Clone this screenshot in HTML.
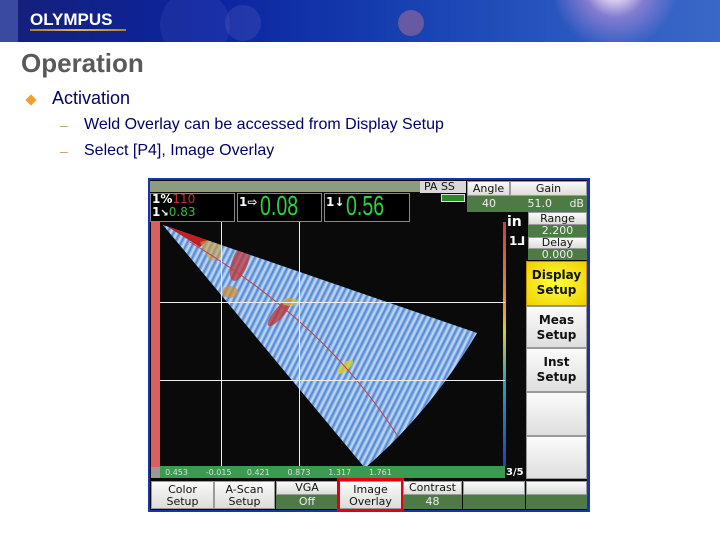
<!DOCTYPE html>
<html><head><meta charset="utf-8"><style>
*{margin:0;padding:0;box-sizing:border-box}
body{width:720px;height:540px;background:#fff;position:relative;overflow:hidden;font-family:"Liberation Sans",sans-serif}
.a{position:absolute}
.btn{position:absolute;background:linear-gradient(#fafafa,#dcdcd8);color:#111;font-size:11px;text-align:center;line-height:12px;font-family:"DejaVu Sans",sans-serif;border:1px solid #9a9a9a}
.gv{position:absolute;background:#4d7a45;color:#eee;font-size:11px;text-align:center;font-family:"DejaVu Sans",sans-serif}
.sb{position:absolute;background:linear-gradient(#fbfbfb,#dedede);border:1px solid #999;font:bold 12px "DejaVu Sans",sans-serif;text-align:center;line-height:15px;color:#111;padding-top:6px}
</style></head><body>
<!-- banner -->
<div class="a" style="left:0;top:0;width:720px;height:42px;overflow:hidden;background:linear-gradient(90deg,#14207a 0%,#0c24a0 30%,#163fb0 55%,#2a58c0 80%,#3a68c8 100%)">
<div class="a" style="left:0;top:0;width:18px;height:42px;background:#3a4aa0"></div>
<div class="a" style="left:160px;top:-10px;width:70px;height:70px;border-radius:50%;background:rgba(90,100,200,.18)"></div>
<div class="a" style="left:225px;top:5px;width:36px;height:36px;border-radius:50%;background:rgba(120,120,200,.2)"></div>
<div class="a" style="left:398px;top:10px;width:26px;height:26px;border-radius:50%;background:rgba(170,110,150,.55)"></div>
<div class="a" style="left:555px;top:-45px;width:120px;height:100px;border-radius:50%;background:radial-gradient(circle at 50% 30%,#fff 0%,#efe0f5 12%,rgba(200,150,220,.55) 35%,rgba(80,90,200,0) 70%)"></div>
<div class="a" style="left:30px;top:10px;color:#fff;font:bold 17px 'Liberation Sans',sans-serif">OLYMPUS</div>
<div class="a" style="left:30px;top:29px;width:96px;height:2px;background:linear-gradient(90deg,#b08030,#e0b060,#b08030)"></div>
</div>
<!-- text -->
<div class="a" style="left:21px;top:48px;color:#5a5a5a;font:bold 26px 'Liberation Sans',sans-serif">Operation</div>
<div class="a" style="left:27px;top:96px;width:8px;height:8px;background:#f0a030;transform:rotate(45deg)"></div>
<div class="a" style="left:52px;top:88px;color:#000066;font-size:18px">Activation</div>
<div class="a" style="left:60px;top:117px;color:#c8a060;font-size:14px">–</div>
<div class="a" style="left:84px;top:116px;color:#000066;font-size:16px">Weld Overlay can be accessed from Display Setup</div>
<div class="a" style="left:60px;top:143px;color:#c8a060;font-size:14px">–</div>
<div class="a" style="left:84px;top:142px;color:#000066;font-size:16px">Select [P4], Image Overlay</div>
<!-- screenshot -->
<div class="a" style="left:148px;top:178px;width:442px;height:334px;background:#1535b0"></div>
<div class="a" style="left:150px;top:180px;width:437px;height:330px;background:#0a0a0a"></div>
<div class="a" style="left:150px;top:181px;width:270px;height:11px;background:#8d9c7c"></div>
<div class="a" style="left:420px;top:181px;width:46px;height:12px;background:#d8d8d8;font:11px 'DejaVu Sans',sans-serif;color:#111;padding-left:4px;line-height:12px">PA SS</div>
<div class="a" style="left:441px;top:194px;width:24px;height:8px;background:#2a8a2a;border:1px solid #ddd"></div>
<div class="a" style="left:150px;top:193px;width:85px;height:29px;border:1px solid #888;background:#000"></div>
<div class="a" style="left:152px;top:193px;font:bold 12px 'DejaVu Sans',sans-serif;color:#fff;line-height:13px">1%<span style="color:#c03030;font-weight:normal">110</span><br>1<span style="font-size:10px">↘</span><span style="color:#30c040;font-weight:normal">0.83</span></div>
<div class="a" style="left:237px;top:193px;width:85px;height:29px;border:1px solid #888;background:#000"></div>
<div class="a" style="left:239px;top:195px;font:bold 12px 'DejaVu Sans',sans-serif;color:#fff">1⇨</div>
<div class="a" style="left:260px;top:190px;font:28px 'Liberation Sans',sans-serif;color:#30d040;transform:scaleX(.7);transform-origin:left">0.08</div>
<div class="a" style="left:324px;top:193px;width:86px;height:29px;border:1px solid #888;background:#000"></div>
<div class="a" style="left:326px;top:195px;font:bold 12px 'DejaVu Sans',sans-serif;color:#fff">1↓</div>
<div class="a" style="left:346px;top:190px;font:28px 'Liberation Sans',sans-serif;color:#30d040;transform:scaleX(.7);transform-origin:left">0.56</div>
<!-- angle gain -->
<div class="btn" style="left:467px;top:181px;width:43px;height:15px;line-height:13px">Angle</div>
<div class="btn" style="left:510px;top:181px;width:77px;height:15px;line-height:13px">Gain</div>
<div class="gv" style="left:467px;top:196px;width:120px;height:16px;line-height:16px;text-align:left;padding-left:15px">40 &nbsp; &nbsp; &nbsp; &nbsp; 51.0 &nbsp; &nbsp; dB</div>
<div class="btn" style="left:528px;top:212px;width:59px;height:13px;line-height:11px">Range</div>
<div class="gv" style="left:528px;top:225px;width:59px;height:12px;line-height:12px">2.200</div>
<div class="btn" style="left:528px;top:237px;width:59px;height:12px;line-height:10px">Delay</div>
<div class="gv" style="left:528px;top:249px;width:59px;height:11px;line-height:11px">0.000</div>
<div class="a" style="left:507px;top:214px;color:#fff;font:bold 14px 'DejaVu Sans',sans-serif">in</div>
<div class="a" style="left:509px;top:234px;color:#fff;font:bold 12px 'DejaVu Sans',sans-serif">1⅃</div>
<div class="sb" style="left:526px;top:261px;width:61px;height:45px;background:radial-gradient(#ffff40,#f0d000);border-color:#c09000">Display<br>Setup</div>
<div class="sb" style="left:526px;top:306px;width:61px;height:42px">Meas<br>Setup</div>
<div class="sb" style="left:526px;top:348px;width:61px;height:44px">Inst<br>Setup</div>
<div class="sb" style="left:526px;top:392px;width:61px;height:44px"></div>
<div class="sb" style="left:526px;top:436px;width:61px;height:43px"></div>
<!-- image -->
<div class="a" style="left:151px;top:222px;width:9px;height:245px;background:#d86060"></div>
<div class="a" style="left:151px;top:467px;width:9px;height:11px;background:#999"></div>
<div class="a" style="left:503px;top:222px;width:3px;height:244px;background:linear-gradient(#c04040,#e0a030 35%,#d0d030 45%,#30a0c0 65%,#2040b0)"></div>
<svg class="a" style="left:160px;top:222px" width="345" height="244">
<defs>
<linearGradient id="st" x1="0" y1="0" x2="1" y2="0.5" spreadMethod="repeat" gradientUnits="userSpaceOnUse" gradientTransform="scale(5)">
<stop offset="0" stop-color="#3a78d0"/><stop offset=".4" stop-color="#b0d0f0"/><stop offset=".6" stop-color="#e4eef8"/><stop offset="1" stop-color="#4a80d4"/>
</linearGradient>
<clipPath id="fan"><path d="M3 3 L317 111 Q270 190 205 246 L3 3 Z"/></clipPath>
</defs>
<path d="M3 3 L317 111 Q270 190 205 246 L3 3 Z" fill="#6a9ade"/>
<g clip-path="url(#fan)">
<rect width="345" height="244" fill="url(#st)" opacity=".8"/>
<path d="M0 0 L55 12 L40 25 L0 0Z" fill="#c02020"/>
<path d="M40 20 L60 15 L62 35 L50 40Z" fill="#d0a040" opacity=".6"/>
<ellipse cx="80" cy="40" rx="8" ry="20" fill="#c03030" opacity=".7" transform="rotate(20 80 40)"/>
<ellipse cx="120" cy="90" rx="18" ry="5" fill="#c03030" transform="rotate(-50 120 90)" opacity=".75"/>
<ellipse cx="130" cy="80" rx="8" ry="4" fill="#d0c040" opacity=".7"/>
<ellipse cx="70" cy="70" rx="8" ry="6" fill="#d09030" opacity=".7"/>
<ellipse cx="185" cy="145" rx="10" ry="4" fill="#d0d030" opacity=".8" transform="rotate(-40 185 145)"/>
<ellipse cx="110" cy="190" rx="14" ry="3" fill="#c03030" opacity=".7" transform="rotate(-40 110 190)"/>
<path d="M30 20 Q180 110 250 235" stroke="#c04040" stroke-width="1" fill="none"/>
</g>
<g stroke="#eee" stroke-width="1">
<line x1="61.5" y1="0" x2="61.5" y2="244"/><line x1="139.5" y1="0" x2="139.5" y2="244"/>
<line x1="0" y1="80.5" x2="345" y2="80.5"/><line x1="0" y1="158.5" x2="345" y2="158.5"/>
</g>
</svg>
<div class="a" style="left:160px;top:466px;width:345px;height:12px;background:#3a9a50;color:#ddd;font:8px 'DejaVu Sans',sans-serif;line-height:13px;white-space:pre">  0.453       -0.015      0.421       0.873       1.317       1.761</div>
<div class="a" style="left:506px;top:467px;color:#fff;font:bold 10px 'DejaVu Sans',sans-serif">3/5</div>
<!-- bottom buttons -->
<div class="btn" style="left:151px;top:481px;width:63px;height:28px;padding-top:2px">Color<br>Setup</div>
<div class="btn" style="left:214px;top:481px;width:61px;height:28px;padding-top:2px">A-Scan<br>Setup</div>
<div class="btn" style="left:276px;top:481px;width:62px;height:14px">VGA</div>
<div class="gv" style="left:276px;top:495px;width:62px;height:14px;line-height:14px">Off</div>
<div class="btn" style="left:339px;top:481px;width:63px;height:28px;padding-top:2px">Image<br>Overlay</div>
<div class="a" style="left:337px;top:478px;width:67px;height:34px;border:3px solid #e00010"></div>
<div class="btn" style="left:403px;top:481px;width:59px;height:14px">Contrast</div>
<div class="gv" style="left:403px;top:495px;width:59px;height:14px;line-height:14px">48</div>
<div class="btn" style="left:463px;top:481px;width:62px;height:14px"></div>
<div class="gv" style="left:463px;top:495px;width:62px;height:14px"></div>
<div class="btn" style="left:526px;top:481px;width:61px;height:14px"></div>
<div class="gv" style="left:526px;top:495px;width:61px;height:14px"></div>
</body></html>
